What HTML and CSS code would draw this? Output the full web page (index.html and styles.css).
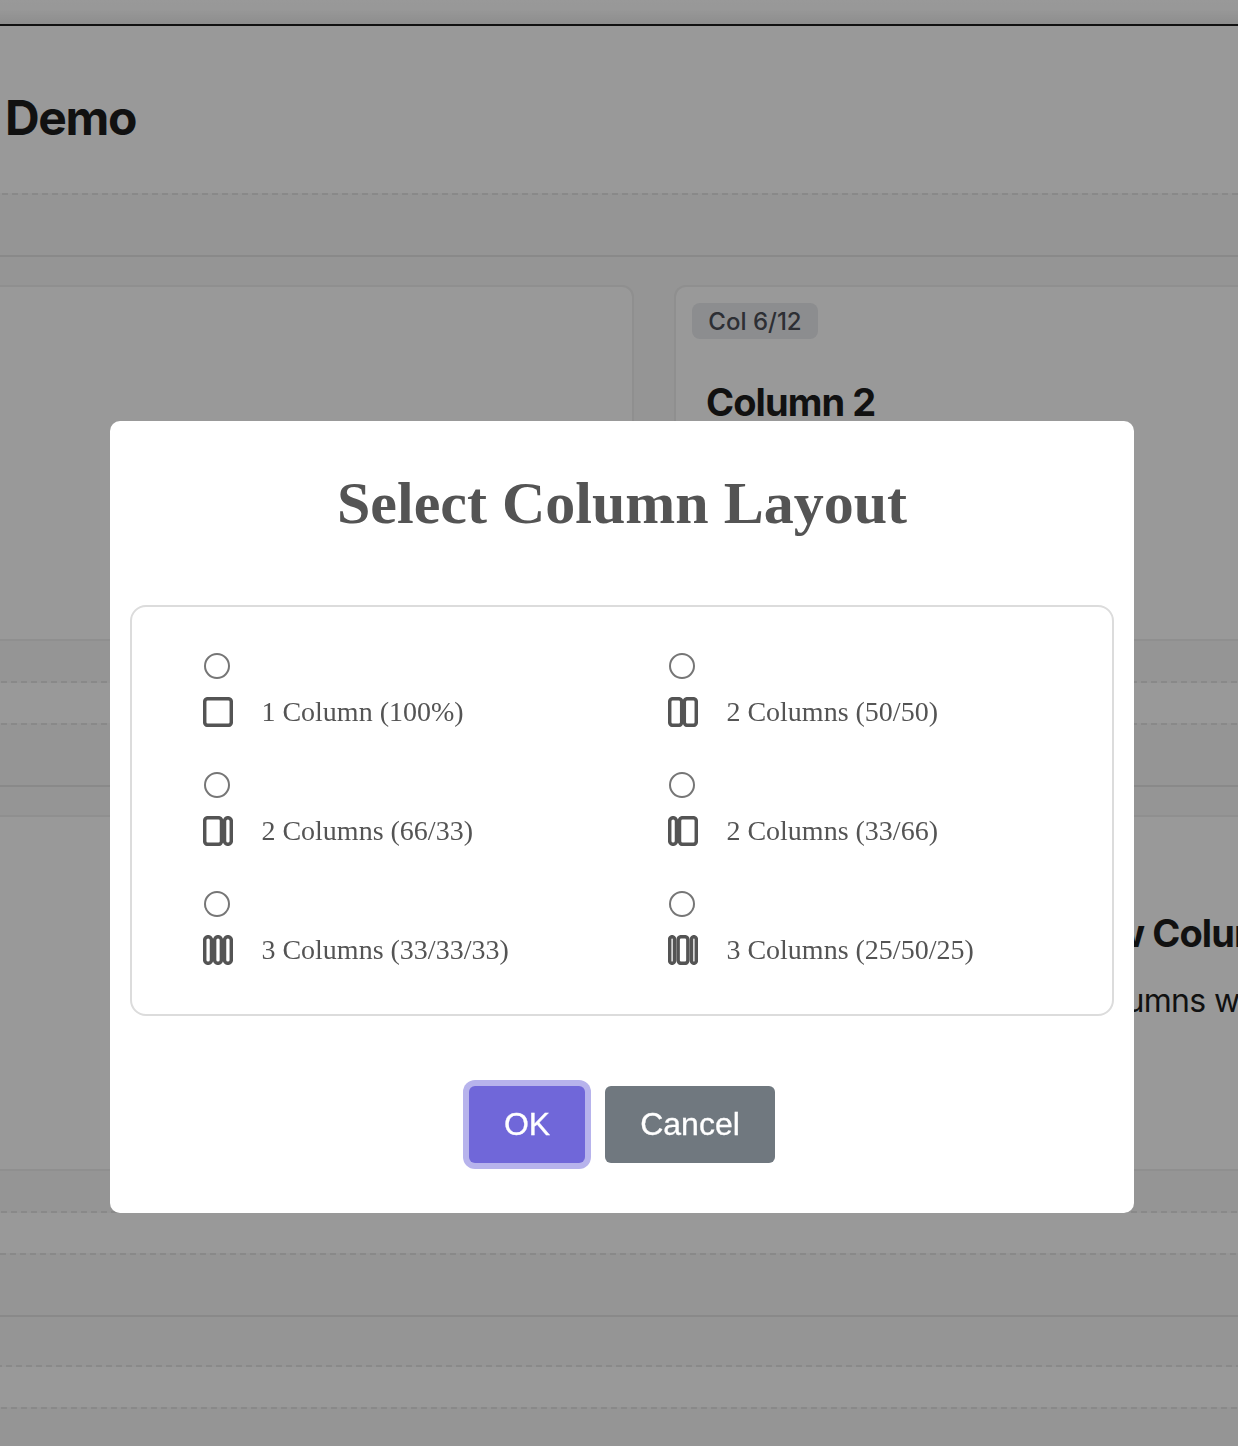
FILE: index.html
```html
<!DOCTYPE html>
<html lang="en">
<head>
<meta charset="utf-8">
<title>Demo</title>
<link rel="stylesheet" href="styles.css">
</head>
<body>
<div class="page">
  <header class="toolbar"></header>
  <main class="editor">
    <h1 class="page-title">Demo</h1>
    <section class="row">
      <div class="row-bar dash-a"></div>
      <div class="row-body">
        <div class="card card-left"></div>
        <div class="card card-right">
          <span class="badge">Col 6/12</span>
          <h2 class="card-title">Column 2</h2>
        </div>
      </div>
      <div class="row-end dash-b"></div>
    </section>
    <section class="row">
      <div class="row-bar dash-b"></div>
      <div class="row-body">
        <div class="card card-wide">
          <h2 class="wide-title">New Column</h2>
          <p class="wide-text">Columns with</p>
        </div>
      </div>
      <div class="row-end dash-b"></div>
    </section>
    <section class="row">
      <div class="row-bar dash-c"></div>
      <div class="row-empty"></div>
      <div class="row-end dash-d"></div>
    </section>
    <section class="row">
      <div class="row-bar dash-b"></div>
    </section>
  </main>
</div>

<div class="overlay">
  <div class="modal" role="dialog" aria-labelledby="modal-title">
    <h2 class="modal-title" id="modal-title">Select Column Layout</h2>
    <div class="options">
      <label class="option">
        <input class="radio" type="radio" name="layout">
        <span class="option-line">
          <svg class="icon" viewBox="0 0 30 30"><rect x="1.7" y="1.7" width="26.6" height="26.6" rx="3"/></svg>
          <span>1 Column (100%)</span>
        </span>
      </label>
      <label class="option">
        <input class="radio" type="radio" name="layout">
        <span class="option-line">
          <svg class="icon" viewBox="0 0 30 30"><rect x="1.7" y="1.7" width="12" height="26.6" rx="3"/><rect x="16.3" y="1.7" width="12" height="26.6" rx="3"/></svg>
          <span>2 Columns (50/50)</span>
        </span>
      </label>
      <label class="option">
        <input class="radio" type="radio" name="layout">
        <span class="option-line">
          <svg class="icon" viewBox="0 0 30 30"><rect x="1.7" y="1.7" width="16.8" height="26.6" rx="3"/><rect x="21.5" y="1.7" width="6.8" height="26.6" rx="3.4"/></svg>
          <span>2 Columns (66/33)</span>
        </span>
      </label>
      <label class="option">
        <input class="radio" type="radio" name="layout">
        <span class="option-line">
          <svg class="icon" viewBox="0 0 30 30"><rect x="1.7" y="1.7" width="6.8" height="26.6" rx="3.4"/><rect x="11.5" y="1.7" width="16.8" height="26.6" rx="3"/></svg>
          <span>2 Columns (33/66)</span>
        </span>
      </label>
      <label class="option">
        <input class="radio" type="radio" name="layout">
        <span class="option-line">
          <svg class="icon" viewBox="0 0 30 30"><rect x="1.7" y="1.7" width="6.8" height="26.6" rx="3.4"/><rect x="11.6" y="1.7" width="6.8" height="26.6" rx="3.4"/><rect x="21.5" y="1.7" width="6.8" height="26.6" rx="3.4"/></svg>
          <span>3 Columns (33/33/33)</span>
        </span>
      </label>
      <label class="option">
        <input class="radio" type="radio" name="layout">
        <span class="option-line">
          <svg class="icon" viewBox="0 0 30 30"><rect x="1.7" y="1.7" width="4.8" height="26.6" rx="2.4"/><rect x="10.1" y="1.7" width="9.8" height="26.6" rx="3"/><rect x="23.5" y="1.7" width="4.8" height="26.6" rx="2.4"/></svg>
          <span>3 Columns (25/50/25)</span>
        </span>
      </label>
    </div>
    <div class="actions">
      <button class="btn btn-ok">OK</button>
      <button class="btn btn-cancel">Cancel</button>
    </div>
  </div>
</div>
</body>
</html>
```
FILE: styles.css
```css
* { box-sizing: border-box; }

body {
  margin: 0;
  height: 1446px;
  overflow: hidden;
  background: #fff;
  color: #1d1d1d;
  font-family: Inter, sans-serif;
}

h1, h2, p { margin: 0; }

.page {
  height: 1446px;
  overflow: hidden;
}

.toolbar {
  height: 26px;
  background: linear-gradient(#fff 0, #fdfdfd 10px, #ececec 24px);
  border-bottom: 2px solid #1d1d1d;
}

.page-title {
  height: 167px;
  padding: 63px 0 0 5px;
  font-size: 48px;
  line-height: 58px;
  font-weight: 700;
  letter-spacing: -0.028em;
}

/* Rows */
.row { background: #f8f8f8; }
.row + .row { margin-top: 40px; }

.row-bar,
.row-end {
  --dash: repeating-linear-gradient(90deg, #e4e4e4 0 6px, transparent 6px 10px);
  background: var(--dash) 0 0 / 1250px 2px repeat-x;
}

.row-bar {
  height: 64px;
  border-bottom: 2px solid #e4e4e4;
}

.row-end {
  height: 2px;
}

.dash-a { background-position-x: 2px; }
.dash-b { background-position-x: 1px; }
.dash-c { background-position-x: 0; }
.dash-d { background-position-x: -4px; }

.row-body {
  display: flex;
  gap: 40px;
  height: 424px;
  padding: 28px 0 40px;
}

.row-empty { height: 48px; }

.card {
  background: #fff;
  border: 2px solid #eee;
}

.card-left {
  width: 634px;
  border-left: 0;
  border-radius: 0 12px 12px 0;
}

.card-right {
  flex: 1;
  padding: 16px;
  border-right: 0;
  border-radius: 12px 0 0 12px;
}

.badge {
  display: block;
  width: 126px;
  height: 36px;
  border-radius: 8px;
  background: #e9ebee;
  color: #4b4f58;
  font-size: 24px;
  font-weight: 500;
  line-height: 37px;
  text-align: center;
}

.card-title {
  padding: 39px 0 0 14px;
  font-size: 38px;
  line-height: 48px;
  letter-spacing: -0.024em;
}

.card-wide {
  flex: 1;
  padding: 92px 0 0;
  border-width: 2px 0;
  white-space: nowrap;
  overflow: hidden;
}

.wide-title {
  padding-left: 1063.5px;
  font-size: 38px;
  line-height: 48px;
  letter-spacing: -0.024em;
}

.wide-text {
  padding: 22px 0 0 1077px;
  font-size: 32px;
  line-height: 44px;
  letter-spacing: -0.02em;
}

/* Dialog */
.overlay {
  position: fixed;
  inset: 0;
  padding: 421px 0 0 110px;
  background: rgba(0, 0, 0, 0.4);
}

.modal {
  width: 1024px;
  height: 792px;
  padding: 0 20px;
  border-radius: 10px;
  background: #fff;
  color: #545454;
  font-family: "Liberation Serif", serif;
}

.modal-title {
  height: 184px;
  padding-top: 48px;
  font-size: 60px;
  line-height: 69px;
  text-align: center;
}

.options {
  display: grid;
  grid-template-columns: 465px 465px;
  grid-auto-rows: 119px;
  height: 411px;
  padding: 46px 0 0 71px;
  border: 2px solid #dcdcdc;
  border-radius: 16px;
}

.option { display: block; }

.radio {
  appearance: none;
  display: block;
  width: 26px;
  height: 26px;
  margin: 0 0 18px 1px;
  border: 2px solid #767676;
  border-radius: 50%;
}

.option-line {
  display: flex;
  align-items: center;
  gap: 28.4px;
  height: 30px;
  font-size: 28px;
  line-height: 30px;
  white-space: nowrap;
}

.icon {
  width: 30px;
  height: 30px;
  fill: none;
  stroke: #545454;
  stroke-width: 3.5;
}

.actions {
  display: flex;
  gap: 20px;
  padding: 70px 0 0 339px;
}

.btn {
  height: 77px;
  padding: 0 0 1px;
  border: 0;
  border-radius: 6px;
  color: #fff;
  font: 32px/74px "Liberation Sans", sans-serif;
  -webkit-text-stroke: 0.3px #fff;
}

.btn-ok {
  width: 116px;
  background: #7067d9;
  box-shadow: 0 0 0 6px #b7b3ec;
}

.btn-cancel {
  width: 170px;
  background: #70787f;
}
```
